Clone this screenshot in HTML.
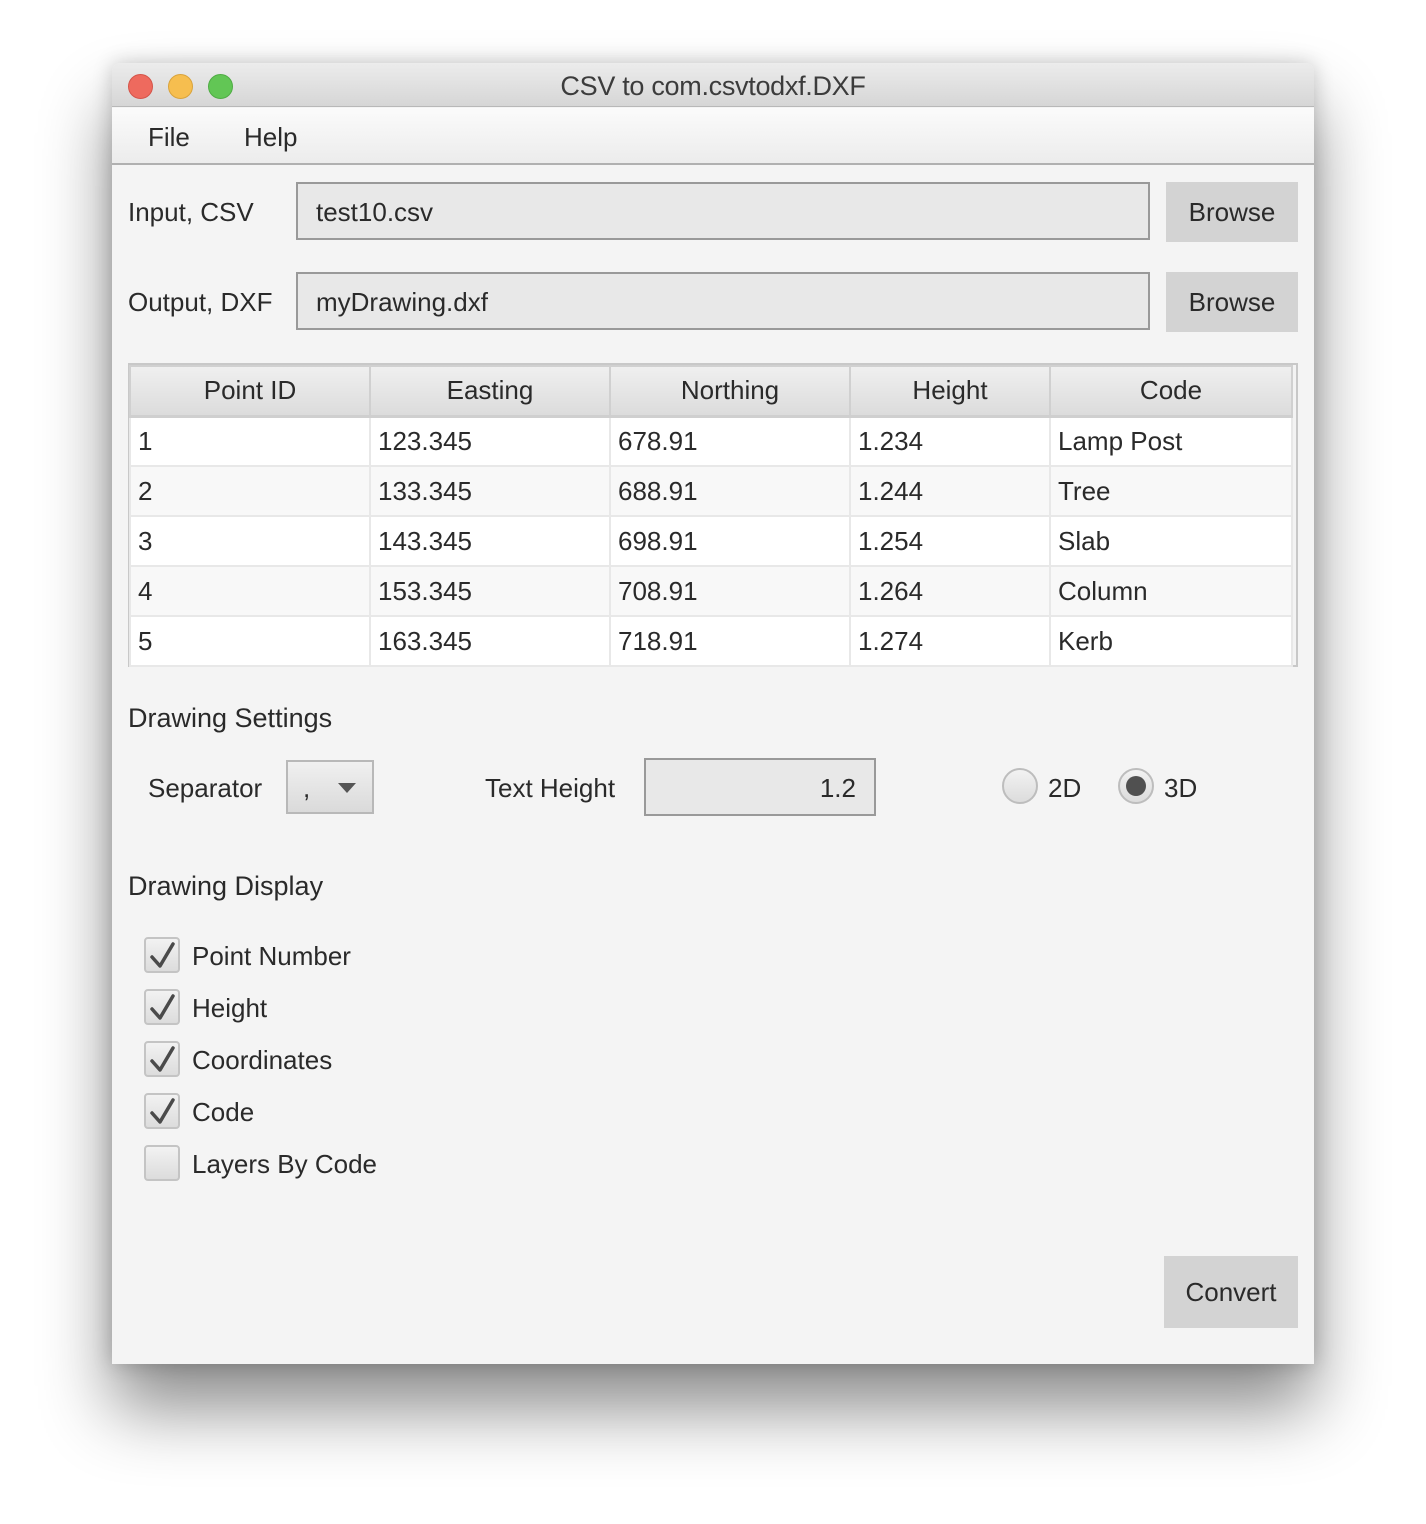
<!DOCTYPE html>
<html><head><meta charset="utf-8"><style>
*{margin:0;padding:0;box-sizing:border-box}
body{width:1426px;height:1524px;background:#fff;position:relative;overflow:hidden;font-family:"Liberation Sans",sans-serif;color:#2a2a2a;font-size:26px}
.a{position:absolute}
#win{left:112px;top:63px;width:1202px;height:1301px;background:#f4f4f4;border-radius:8px 8px 0 0;box-shadow:0 45px 70px rgba(0,0,0,.45),0 0 20px rgba(0,0,0,.2);overflow:hidden}
.t{white-space:nowrap}
.btn{background:#d3d3d3;text-align:center}
.fld{background:#e8e8e8;border:2px solid #999}
.dot{width:25px;height:25px;border-radius:50%;top:11px}
.cb{width:36px;height:36px;border:2px solid #c4c4c4;border-radius:4px;background:linear-gradient(#f2f2f2,#dcdcdc)}
table{border-collapse:collapse;table-layout:fixed}
td,th{height:50px;font-weight:normal;border:2px solid #e8e8e8;padding:0 7px;text-align:left}
th{background:linear-gradient(#efefef,#dcdcdc);text-align:center;border:2px solid #d0d0d0;border-bottom:3px solid #cfcfcf}
tr.o td{background:#f8f8f8}
tr.e td{background:#fff}
</style></head><body>
<div id="win" class="a">
 <div class="a" style="left:0;top:0;width:1202px;height:44px;background:linear-gradient(#ececec,#d6d6d6);border-bottom:1px solid #b8b8b8"></div>
 <div class="a dot" style="left:16px;background:#ee6a5e;border:1px solid #d45449"></div>
 <div class="a dot" style="left:56px;background:#f6be4f;border:1px solid #d9a33b"></div>
 <div class="a dot" style="left:96px;background:#62c655;border:1px solid #4fac44"></div>
 <div class="a t" style="left:0;width:1202px;text-align:center;top:8px;font-size:27px;color:#3c3c3c;letter-spacing:-0.3px">CSV to com.csvtodxf.DXF</div>
 <div class="a" style="left:0;top:45px;width:1202px;height:57px;background:linear-gradient(#fbfbfb,#ececec);border-bottom:2px solid #b0b0b0"></div>
 <div class="a t" style="left:36px;top:59px">File</div>
 <div class="a t" style="left:132px;top:59px">Help</div>
</div>
<div class="a t" style="left:128px;top:197px">Input, CSV</div>
<div class="a fld t" style="left:296px;top:182px;width:854px;height:58px;padding:13px 0 0 18px">test10.csv</div>
<div class="a btn t" style="left:1166px;top:182px;width:132px;height:60px;line-height:60px">Browse</div>
<div class="a t" style="left:128px;top:287px">Output, DXF</div>
<div class="a fld t" style="left:296px;top:272px;width:854px;height:58px;padding:13px 0 0 18px">myDrawing.dxf</div>
<div class="a btn t" style="left:1166px;top:272px;width:132px;height:60px;line-height:60px">Browse</div>

<div class="a" style="left:128px;top:363px;width:1170px;height:304px;border:2px solid #c8c8c8;background:#f3f3f3"></div>
<table class="a" style="left:129px;top:365px;width:1162px">
<colgroup><col style="width:240px"><col style="width:240px"><col style="width:240px"><col style="width:200px"><col style="width:242px"></colgroup>
<tr><th>Point ID</th><th>Easting</th><th>Northing</th><th>Height</th><th>Code</th></tr>
<tr class="e"><td>1</td><td>123.345</td><td>678.91</td><td>1.234</td><td>Lamp Post</td></tr>
<tr class="o"><td>2</td><td>133.345</td><td>688.91</td><td>1.244</td><td>Tree</td></tr>
<tr class="e"><td>3</td><td>143.345</td><td>698.91</td><td>1.254</td><td>Slab</td></tr>
<tr class="o"><td>4</td><td>153.345</td><td>708.91</td><td>1.264</td><td>Column</td></tr>
<tr class="e"><td>5</td><td>163.345</td><td>718.91</td><td>1.274</td><td>Kerb</td></tr>
</table>

<div class="a t" style="left:128px;top:703px;font-size:27px">Drawing Settings</div>
<div class="a t" style="left:148px;top:773px">Separator</div>
<div class="a" style="left:286px;top:760px;width:88px;height:54px;border:2px solid #b8b8b8;background:linear-gradient(#f0f0f0,#dadada)"></div>
<div class="a t" style="left:303px;top:773px">,</div>
<div class="a" style="left:338px;top:783px;width:0;height:0;border-left:9px solid transparent;border-right:9px solid transparent;border-top:10px solid #555"></div>
<div class="a t" style="left:485px;top:773px">Text Height</div>
<div class="a fld t" style="left:644px;top:758px;width:232px;height:58px;text-align:right;padding:13px 18px 0 0">1.2</div>
<div class="a" style="left:1002px;top:768px;width:36px;height:36px;border-radius:50%;border:2px solid #bdbdbd;background:linear-gradient(#f2f2f2,#dcdcdc)"></div>
<div class="a t" style="left:1048px;top:773px">2D</div>
<div class="a" style="left:1118px;top:768px;width:36px;height:36px;border-radius:50%;border:2px solid #bdbdbd;background:linear-gradient(#f2f2f2,#dcdcdc)"></div>
<div class="a" style="left:1126px;top:776px;width:20px;height:20px;border-radius:50%;background:#505050"></div>
<div class="a t" style="left:1164px;top:773px">3D</div>

<div class="a t" style="left:128px;top:871px;font-size:27px">Drawing Display</div>

<div class="a cb" style="left:144px;top:937px"></div>
<div class="a cb" style="left:144px;top:989px"></div>
<div class="a cb" style="left:144px;top:1041px"></div>
<div class="a cb" style="left:144px;top:1093px"></div>
<div class="a cb" style="left:144px;top:1145px"></div>
<svg class="a" style="left:144px;top:937px" width="36" height="210" viewBox="0 0 36 210">
<g fill="none" stroke="#4a4a4a" stroke-width="3.5" stroke-linecap="round" stroke-linejoin="round">
<path d="M8 20 L16 29 L29 7"/><path d="M8 72 L16 81 L29 59"/><path d="M8 124 L16 133 L29 111"/><path d="M8 176 L16 185 L29 163"/>
</g></svg>
<div class="a t" style="left:192px;top:941px">Point Number</div>
<div class="a t" style="left:192px;top:993px">Height</div>
<div class="a t" style="left:192px;top:1045px">Coordinates</div>
<div class="a t" style="left:192px;top:1097px">Code</div>
<div class="a t" style="left:192px;top:1149px">Layers By Code</div>

<div class="a btn t" style="left:1164px;top:1256px;width:134px;height:72px;line-height:72px">Convert</div>
</body></html>
